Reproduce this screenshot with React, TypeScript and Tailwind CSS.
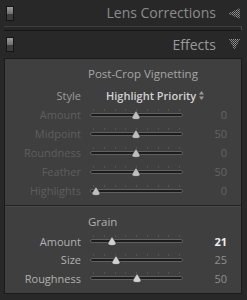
import React from 'react';

const font = { fontFamily: '"Open Sans", "Liberation Sans", sans-serif' };

const SwitchIcon = () => (
	<div className="w-[8px] h-[15px] border border-[#151515] flex flex-col bg-[#3a3a3a]">
		<div className="h-[7px] bg-gradient-to-b from-[#9a9a9a] to-[#6e6e6e]" />
		<div className="flex-1 bg-[#3c3c3c]" />
	</div>
);

const LeftArrow = () => (
	<svg width="12" height="11" viewBox="0 0 12 11">
		<defs>
			<pattern id="dotsL" width="2" height="2" patternUnits="userSpaceOnUse">
				<rect width="1" height="1" fill="#9a9a9a" />
				<rect x="1" y="1" width="1" height="1" fill="#7a7a7a" />
			</pattern>
		</defs>
		<polygon points="0,5.5 12,0 12,11" fill="url(#dotsL)" />
	</svg>
);

const DownArrow = () => (
	<svg width="11" height="11" viewBox="0 0 11 11">
		<defs>
			<pattern id="dotsD" width="2" height="2" patternUnits="userSpaceOnUse">
				<rect width="1" height="1" fill="#9a9a9a" />
				<rect x="1" y="1" width="1" height="1" fill="#7a7a7a" />
			</pattern>
		</defs>
		<polygon points="0,0 11,0 5.5,11" fill="url(#dotsD)" />
	</svg>
);

const Thumb = ({ bright }: { bright: boolean }) => (
	<svg width="10" height="10" viewBox="0 0 10 10">
		<path d="M5 0.5 L9 7 Q9.5 9.5 5 9.5 Q0.5 9.5 1 7 Z" fill={bright ? '#d0d0d0' : '#bdbdbd'} stroke="#2a2a2a" strokeWidth="0.6" />
	</svg>
);

interface SliderRowProps {
	label: string;
	value: string;
	pos: number;
	dim?: boolean;
	strong?: boolean;
	h: string;
}

const SliderRow: React.FC<SliderRowProps> = ({ label, value, pos, dim, strong, h }) => {
	return (
		<div className={`flex items-center ${h}`}>
			<div className={`w-[76px] text-right text-[11px] leading-none ${dim ? 'text-[#5e5e5e]' : 'text-[#b2b2b2]'}`}>
				{label}
			</div>
			<div className="ml-[9px] w-[93px] h-full relative">
				<div className="absolute left-0 right-0 top-[calc(50%-6px)] flex justify-between px-[3px]">
					{[0, 1, 2, 3, 4, 5, 6, 7, 8].map((i) => (
						<div key={i} className="w-px h-[2px] bg-[#535353]" />
					))}
				</div>
				<div className="absolute left-0 right-0 top-[calc(50%-2px)] h-[4px] rounded-full bg-[#1c1c1c] border border-[#606060]" />
				<div className="absolute top-[calc(50%-5px)]" style={{ left: pos - 5 }}>
					<Thumb bright={!dim} />
				</div>
			</div>
			<div
				className={`w-[44px] text-right text-[11px] leading-none ${
					dim ? 'text-[#646464]' : strong ? 'text-[#ededed] font-bold' : 'text-[#8e8e8e]'
				}`}
			>
				{value}
			</div>
		</div>
	);
};

export default function App() {
	return (
		<div className="w-[247px] h-[300px] bg-[#282828] overflow-hidden" style={font}>
			{/* Lens Corrections header */}
			<div className="h-[26px] flex items-center pl-[6px] pr-[7px]">
				<SwitchIcon />
				<div className="flex-1 text-right text-[14px] text-[#8c8c8c] pr-[12px] leading-none">Lens Corrections</div>
				<LeftArrow />
			</div>
			{/* collapsed frame */}
			<div className="ml-[4px] w-[238px] h-[5px] border-t border-[#3e3e3e] border-b border-b-[#151515] border-r border-r-[#4a4a4a] bg-[#262626]" />
			{/* Effects header */}
			<div className="h-[27px] flex items-center pl-[6px] pr-[7px]">
				<SwitchIcon />
				<div className="flex-1 text-right text-[14px] text-[#9a9a9a] pr-[13px] leading-none">Effects</div>
				<DownArrow />
			</div>
			{/* Effects panel */}
			<div className="ml-[4px] w-[238px] h-[236px] bg-[#3f3f3f] border border-[#1a1a1a] flex flex-col">
				<div className="pt-[8px] h-[22px] pl-[83px] text-[11.5px] leading-[14px] text-[#a6a6a6]">Post-Crop Vignetting</div>
				<div className="mt-[6px] h-[16px] flex items-center">
					<div className="w-[76px] text-right text-[11px] leading-none text-[#9c9c9c]">Style</div>
					<div className="ml-[25px] text-[11px] font-semibold leading-none text-[#d2d2d2]">Highlight Priority</div>
					<svg className="ml-[3px]" width="5" height="9" viewBox="0 0 5 9">
						<polygon points="2.5,0 5,3.5 0,3.5" fill="#9a9a9a" />
						<polygon points="0,5.5 5,5.5 2.5,9" fill="#9a9a9a" />
					</svg>
				</div>
				<div className="mt-[2px]">
					<SliderRow label="Amount" value="0" pos={46} dim h="h-[19px]" />
					<SliderRow label="Midpoint" value="50" pos={46} dim h="h-[19px]" />
					<SliderRow label="Roundness" value="0" pos={46} dim h="h-[19px]" />
					<SliderRow label="Feather" value="50" pos={46} dim h="h-[19px]" />
					<SliderRow label="Highlights" value="0" pos={6} dim h="h-[19px]" />
				</div>
				<div className="mt-[5px] border-t border-[#222] border-b border-b-[#4a4a4a]" />
				<div className="mt-[8px] h-[14px] pl-[83px] text-[11.5px] leading-[14px] text-[#b0b0b0]">Grain</div>
				<div className="mt-[3px]">
					<SliderRow label="Amount" value="21" pos={22} strong h="h-[18.5px]" />
					<SliderRow label="Size" value="25" pos={26} h="h-[18.5px]" />
					<SliderRow label="Roughness" value="50" pos={47} h="h-[18.5px]" />
				</div>
			</div>
		</div>
	);
}
